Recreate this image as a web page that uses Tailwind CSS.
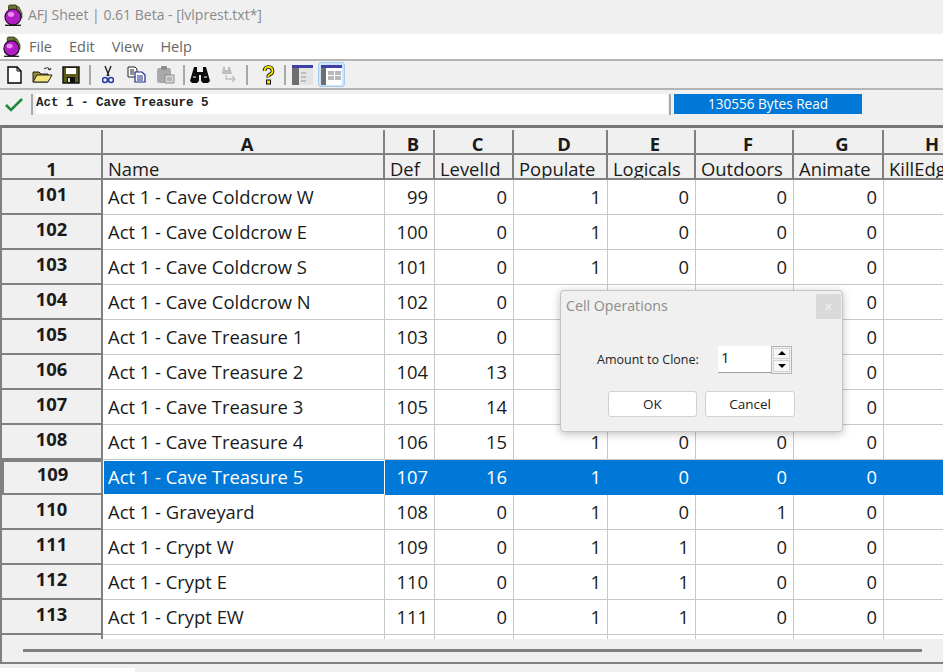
<!DOCTYPE html>
<html lang="en">
<head>
    <meta charset="UTF-8">
    <title>AFJ Sheet | 0.61 Beta - [lvlprest.txt*]</title>
    <script src="https://cdn.jsdelivr.net/npm/@tailwindcss/browser@4"></script>
</head>
<body class="relative w-[943px] h-[672px] overflow-hidden bg-[#f0f0f0] font-['Open_Sans',sans-serif] text-[#1a1a1a]">
    <svg class="hidden">
        <symbol id="flask" viewBox="0 0 20 22">
            <path d="M12 1l4 2 3 6v5l-3-1-2-6z" fill="#77773a" stroke="#3a3a18" stroke-width=".6"/>
            <rect x="5.500" y="1" width="8" height="6" rx="1.500" fill="#6f7030" stroke="#2b2b10" stroke-width=".8"/>
            <circle cx="10" cy="13" r="8" fill="#b01ec4" stroke="#1c0b22" stroke-width="1.200"/>
            <ellipse cx="8" cy="10.500" rx="3.200" ry="2.400" fill="#e98af0"/>
            <path d="M2 21.300h16" stroke="#111" stroke-width="1.300"/>
        </symbol>
    </svg>

    <!-- Title bar -->
    <div class="h-[34px] flex items-center pl-[3px] pb-[5px] gap-[5px] text-[14px] text-[#8a8a8a]">
        <svg class="w-[20px] h-[22px]"><use href="#flask"/></svg>
        <span>AFJ Sheet | 0.61 Beta - [lvlprest.txt*]</span>
    </div>

    <!-- Menu -->
    <div class="h-[25px] bg-white flex items-center pl-[2px] text-[14.5px] text-[#666666]">
        <svg class="w-[19px] h-[21px] mr-[8px]"><use href="#flask"/></svg>
        <span class="mr-[17px]">File</span>
        <span class="mr-[17px]">Edit</span>
        <span class="mr-[17px]">View</span>
        <span>Help</span>
    </div>

    <!-- Toolbar -->
    <div class="h-[31px] border-t-2 border-b-2 border-[#b4b4b4] flex items-center pl-[7px]">
        <svg class="w-[15px] h-[18px]" viewBox="0 0 15 18"><path d="M1 1h9l4 4v12H1z" fill="#fff" stroke="#000" stroke-width="1.400"/><path d="M10 1v4h4" fill="none" stroke="#000"/></svg>
        <svg class="w-[21px] h-[18px] ml-[10px]" viewBox="0 0 21 18"><path d="M1 6h6l2 2h7v8H1z" fill="#8f8a2c" stroke="#222"/><path d="M1 16l4-7h15l-4 7z" fill="#f3e37a" stroke="#222"/><path d="M12 3q4-3 6 1m0 0l1-2m-1 2l-2-1" fill="none" stroke="#222"/></svg>
        <svg class="w-[18px] h-[18px] ml-[9px]" viewBox="0 0 18 18"><path d="M1 1h16v16H1z" fill="#5c5c18" stroke="#111" stroke-width="1.400"/><rect x="4" y="2" width="10" height="6" fill="#fff"/><rect x="5" y="11" width="8" height="6" fill="#111"/><rect x="6" y="12" width="2" height="4" fill="#ddd"/></svg>
        <div class="w-[2px] h-[20px] bg-[#a8a8a8] ml-[9px]"></div>
        <svg class="w-[12px] h-[19px] ml-[11px]" viewBox="0 0 12 19"><path d="M3 1l4 10M9 1L5 11" stroke="#222" stroke-width="1.400" fill="none"/><circle cx="3" cy="15" r="2.500" fill="none" stroke="#2a3ca8" stroke-width="1.600"/><circle cx="9" cy="15" r="2.500" fill="none" stroke="#2a3ca8" stroke-width="1.600"/></svg>
        <svg class="w-[19px] h-[17px] ml-[13px]" viewBox="0 0 19 17"><path d="M1 1h7l2 2v8H1z" fill="#fff" stroke="#222"/><path d="M3 4h4M3 6h4M3 8h4" stroke="#222"/><path d="M8 6h7l3 3v7H8z" fill="#fff" stroke="#1c2a86" stroke-width="1.200"/><path d="M10 10h6M10 12h6M10 14h6" stroke="#1c2a86"/></svg>
        <svg class="w-[19px] h-[18px] ml-[10px]" viewBox="0 0 19 18"><rect x="1" y="2" width="14" height="15" rx="2" fill="#a9a9a9"/><rect x="5" y="0" width="6" height="4" rx="1" fill="#8e8e8e"/><path d="M9 9h9v8H9z" fill="#d8d8d8" stroke="#8e8e8e"/><path d="M11 12h5M11 14h5" stroke="#8e8e8e"/></svg>
        <div class="w-[2px] h-[20px] bg-[#a8a8a8] ml-[8px]"></div>
        <svg class="w-[20px] h-[17px] ml-[5px]" viewBox="0 0 20 17"><path d="M4 1h3v5h6V1h3l4 14-2 2h-5l-2-2V9H9v6l-2 2H2l-2-2z" fill="#0c0c0c"/><path d="M3 11h3M14 11h3" stroke="#fff"/></svg>
        <svg class="w-[17px] h-[17px] ml-[11px]" viewBox="0 0 17 17"><path d="M2 1h2v3h3V1h2l2 7H1z" fill="#bdbdbd"/><path d="M5 9v4h9m-3-3l3 3-3 3" fill="none" stroke="#bdbdbd" stroke-width="1.300"/></svg>
        <div class="w-[2px] h-[20px] bg-[#a8a8a8] ml-[8px]"></div>
        <svg class="w-[13px] h-[20px] ml-[14px]" viewBox="0 0 13 20"><path d="M2.500 6q0-4 4-4t4 4q0 2.500-2.500 3.500t-1.500 3" fill="none" stroke="#111" stroke-width="3.600"/><path d="M2.500 6q0-4 4-4t4 4q0 2.500-2.500 3.500t-1.500 3" fill="none" stroke="#f5e400" stroke-width="1.800"/><rect x="4.500" y="15" width="4" height="4" fill="#f5e400" stroke="#111"/></svg>
        <div class="w-[2px] h-[20px] bg-[#a8a8a8] ml-[9px]"></div>
        <svg class="w-[21px] h-[20px] ml-[6px]" viewBox="0 0 21 20"><rect width="21" height="3" fill="#3f3fa8"/><rect y="3" width="7" height="17" fill="#6e6e6e"/><rect x="7" y="3" width="14" height="17" fill="#e4e4e4"/><path d="M9 7h5v2H9zM9 11h5v2H9zM9 15h5v2H9z" fill="#bdbdbd"/></svg>
        <div class="w-[27px] h-[25px] ml-[5px] flex items-center justify-center rounded-[3px] bg-[#cfe4f7] border border-[#a4cdf0]">
            <svg class="w-[21px] h-[20px]" viewBox="0 0 21 20"><rect width="21" height="3" fill="#3f3fa8"/><rect y="3" width="5" height="17" fill="#6e6e6e"/><rect x="5" y="3" width="16" height="17" fill="#fff"/><path d="M7 6h6v4H7zM14 6h6v4h-6zM7 11h6v4H7zM14 11h6v4h-6z" fill="#b8b8b8"/></svg>
        </div>
    </div>

    <!-- Formula bar -->
    <div class="h-[35px] flex items-start pt-[4px]">
        <svg class="w-[18px] h-[15px] ml-[5px] mt-[3px]" viewBox="0 0 18 15"><path d="M1 8l5 5L17 2" fill="none" stroke="#1f8a3a" stroke-width="2.600"/></svg>
        <div class="w-[2px] h-[21px] bg-[#a8a8a8] ml-[8px]"></div>
        <div class="w-[632px] h-[20px] bg-white ml-[3px] font-['Liberation_Mono',monospace] font-bold text-[12.5px] leading-[18px] text-[#222222]">Act 1 - Cave Treasure 5</div>
        <div class="w-[2px] h-[21px] bg-[#a8a8a8] ml-[1px]"></div>
        <div class="w-[188px] h-[20px] bg-[#0078d7] ml-[3px] text-white text-[13.6px] leading-[19px] text-center">130556 Bytes Read</div>
    </div>

    <!-- Sheet -->
    <div class="h-[539px] border-t-[3px] border-[#757575] border-l-2 border-l-[#808080] overflow-hidden">
        <div class="h-[2px]"></div>
        <div id="sheetHead" class="grid grid-cols-[101px_282px_50px_79px_94px_88px_98px_90px_90px] w-[941px] overflow-hidden text-[18.4px]"></div>
        <div id="sheetBody" class="grid grid-cols-[101px_282px_50px_79px_94px_88px_98px_90px_90px] auto-rows-[35px] w-[941px] h-[459px] overflow-hidden bg-white text-[18.4px]"></div>
        <div class="h-[25px] border-b-2 border-[#808080] flex items-center pl-[21px]">
            <div class="w-[899px] h-[3px] bg-[#808080]"></div>
        </div>
    </div>
    <div class="h-[8px] flex items-end">
        <div class="w-[135px] h-[4px] bg-white"></div>
    </div>

    <!-- Cell Operations dialog -->
    <div class="absolute left-[560px] top-[290px] w-[283px] h-[142px] rounded-[4px] bg-[#f0f0f0] border border-[#c4c4c4] shadow-[0_2px_8px_rgba(0,0,0,0.25)]">
        <div class="h-[30px] flex items-center justify-between pl-[5px] pr-[1px] text-[14.2px] text-[#8c8c8c]">
            <span>Cell Operations</span>
            <div class="w-[25px] h-[25px] bg-[#d9d9d9] flex items-center justify-center text-[#f5f5f5] text-[14px]">×</div>
        </div>
        <div class="flex items-center pl-[36px] mt-[25px] h-[27px]">
            <span class="w-[121px] pt-[1px] text-[12.5px] text-[#222222]">Amount to Clone:</span>
            <div class="w-[53px] h-[27px] bg-white border-b border-[#a0a0a0] pl-[3px] text-[15px] leading-[22px]">1</div>
            <div class="w-[21px] h-[28px] border border-[#b4b4b4] flex flex-col gap-[1px] p-[1px]">
                <div class="flex-1 bg-[#f7f7f7] border border-[#d4d4d4] flex items-center justify-center"><div class="w-0 h-0 border-x-[4px] border-x-transparent border-b-[4px] border-b-black"></div></div>
                <div class="flex-1 bg-[#f7f7f7] border border-[#d4d4d4] flex items-center justify-center"><div class="w-0 h-0 border-x-[4px] border-x-transparent border-t-[4px] border-t-black"></div></div>
            </div>
        </div>
        <div class="flex pl-[47px] gap-[8px] mt-[18px] text-[13.5px] text-[#222222]">
            <div class="w-[89px] h-[26px] bg-white border border-[#d0d0d0] rounded-[3px] flex items-center justify-center">OK</div>
            <div class="w-[90px] h-[26px] bg-white border border-[#d0d0d0] rounded-[3px] flex items-center justify-center">Cancel</div>
        </div>
    </div>

    <script>
        const columns = [['A', 'Name'], ['B', 'Def'], ['C', 'LevelId'], ['D', 'Populate'], ['E', 'Logicals'], ['F', 'Outdoors'], ['G', 'Animate'], ['H', 'KillEdge']];
        const rows = [
            [101, 'Act 1 - Cave Coldcrow W', 99, 0, 1, 0, 0, 0],
            [102, 'Act 1 - Cave Coldcrow E', 100, 0, 1, 0, 0, 0],
            [103, 'Act 1 - Cave Coldcrow S', 101, 0, 1, 0, 0, 0],
            [104, 'Act 1 - Cave Coldcrow N', 102, 0, 1, 0, 0, 0],
            [105, 'Act 1 - Cave Treasure 1', 103, 0, 1, 0, 0, 0],
            [106, 'Act 1 - Cave Treasure 2', 104, 13, 1, 0, 0, 0],
            [107, 'Act 1 - Cave Treasure 3', 105, 14, 1, 0, 0, 0],
            [108, 'Act 1 - Cave Treasure 4', 106, 15, 1, 0, 0, 0],
            [109, 'Act 1 - Cave Treasure 5', 107, 16, 1, 0, 0, 0],
            [110, 'Act 1 - Graveyard', 108, 0, 1, 0, 1, 0],
            [111, 'Act 1 - Crypt W', 109, 0, 1, 1, 0, 0],
            [112, 'Act 1 - Crypt E', 110, 0, 1, 1, 0, 0],
            [113, 'Act 1 - Crypt EW', 111, 0, 1, 1, 0, 0],
            ['', '', '', '', '', '', '', '']
        ];
        const headBox = 'bg-[#f0f0f0] border-r-2 border-b-2 border-[#808080] h-[25px] pt-[5px] leading-[18px] overflow-hidden whitespace-nowrap';

        // two header rows: letters, then the field names from row 1 of the file
        document.getElementById('sheetHead').innerHTML =
            `<div class="${headBox}"></div>` + columns.map(c => `<div class="${headBox} text-center pl-[8px] font-bold">${c[0]}</div>`).join('') +
            `<div class="${headBox} text-center font-bold">1</div>` + columns.map(c => `<div class="${headBox} pl-[5px]">${c[1]}</div>`).join('');

        document.getElementById('sheetBody').innerHTML = rows.map(r => {
            const on = r[0] === 109;
            const cell = on ? 'bg-[#0078d7] text-white border-[#0078d7]' : 'bg-white border-[#c8c8c8]';
            return `
                <div class="bg-[#f0f0f0] border-r-2 border-b-2 border-[#808080] text-center font-bold ${on ? 'border-l-2 border-t-2 leading-[24px]' : 'leading-[28px]'}">${r[0]}</div>
                <div class="border-r border-b pl-[5px] leading-[34px] ${cell} ${on ? 'outline outline-1 -outline-offset-1 outline-white' : ''}">${r[1]}</div>
                ${r.slice(2).map(v => `<div class="border-r border-b pr-[6px] text-right leading-[34px] ${cell}">${v}</div>`).join('')}
                <div class="border-r border-b ${cell}"></div>`;
        }).join('');
    </script>
</body>
</html>
